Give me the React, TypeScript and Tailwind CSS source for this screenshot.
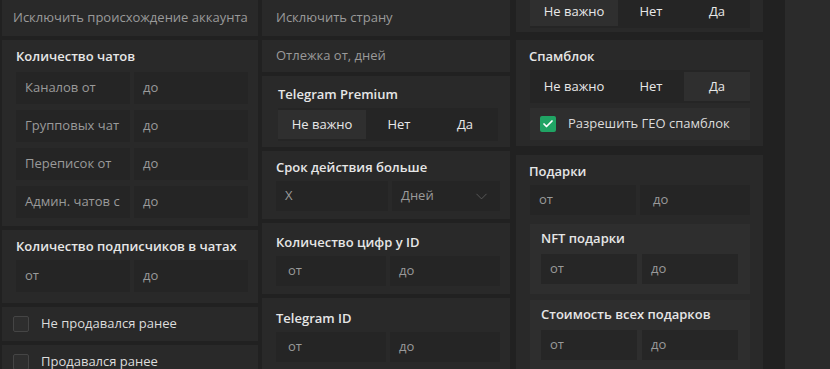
import { Check, ChevronDown } from "lucide-react";

const FONT = { fontFamily: '"Open Sans", "Noto Sans", sans-serif' };

function Title({ children, className = "" }: { children: string; className?: string }) {
  return (
    <p className={`text-[13px] font-semibold leading-[18px] text-[#e6e6e6] ${className}`}>
      {children}
    </p>
  );
}

function Field({
  label,
  className = "",
  tone = "bg-[#252525]",
}: {
  label: string;
  className?: string;
  tone?: string;
}) {
  return (
    <div
      className={`flex items-center overflow-hidden whitespace-nowrap pl-[9px] text-[13px] text-[#9a9a9a] ${tone} ${className}`}
    >
      {label}
    </div>
  );
}

function Segmented({ value, className = "" }: { value: string; className?: string }) {
  const opts = [
    { label: "Не важно", w: "w-[88px]" },
    { label: "Нет", w: "w-[66px]" },
    { label: "Да", w: "w-[66px]" },
  ];
  return (
    <div className={`flex h-[33px] items-center bg-[#252525] ${className}`}>
      {opts.map((o) => (
        <div
          key={o.label}
          className={`flex h-[29px] items-center justify-center text-[13px] text-[#e8e8e8] ${o.w} ${
            o.label === value ? "bg-[#2f2f2f]" : ""
          }`}
        >
          {o.label}
        </div>
      ))}
    </div>
  );
}

function CheckRow({ label }: { label: string }) {
  return (
    <div className="flex h-[34px] shrink-0 items-center gap-[12px] bg-[#292929] pl-[11px] text-[13px] text-[#dcdcdc]">
      <span className="h-[16px] w-[16px] rounded-[2px] border border-[#454545] bg-[#2e2e2e]" />
      {label}
    </div>
  );
}

export default function App() {
  const chats = ["Каналов от", "Групповых чат", "Переписок от", "Админ. чатов с"];

  return (
    <div
      className="flex h-[369px] w-[830px] overflow-hidden bg-[#212121] pl-[2px]"
      style={FONT}
    >
      {/* column 1 */}
      <div className="flex w-[256px] shrink-0 flex-col gap-[4px]">
        <Field
          label="Исключить происхождение аккаунта"
          className="h-[36px] shrink-0 pl-[11px]"
          tone="bg-[#292929]"
        />
        <div className="bg-[#292929] pb-[8px] pl-[14px] pr-[10px] pt-[7px]">
          <Title>Количество чатов</Title>
          <div className="mt-[7px] flex flex-col gap-[6px]">
            {chats.map((c) => (
              <div key={c} className="flex gap-[4px]">
                <Field label={c} className="h-[32px] w-[114px]" />
                <Field label="до" className="h-[32px] w-[114px]" />
              </div>
            ))}
          </div>
        </div>
        <div className="bg-[#292929] pb-[11px] pl-[14px] pr-[10px] pt-[7px]">
          <Title>Количество подписчиков в чатах</Title>
          <div className="mt-[5px] flex gap-[4px]">
            <Field label="от" className="h-[32px] w-[114px]" />
            <Field label="до" className="h-[32px] w-[114px]" />
          </div>
        </div>
        <CheckRow label="Не продавался ранее" />
        <CheckRow label="Продавался ранее" />
      </div>

      {/* column 2 */}
      <div className="ml-[4px] flex w-[248px] shrink-0 flex-col gap-[4px]">
        <Field label="Исключить страну" className="h-[36px] shrink-0 pl-[14px]" tone="bg-[#292929]" />
        <Field label="Отлежка от, дней" className="h-[32px] shrink-0 pl-[14px]" tone="bg-[#292929]" />
        <div className="bg-[#292929] pb-[6px] pl-[16px] pr-[12px] pt-[9px]">
          <Title>Telegram Premium</Title>
          <Segmented value="Не важно" className="mt-[5px] w-[220px]" />
        </div>
        <div className="bg-[#292929] pb-[8px] pl-[14px] pr-[10px] pt-[7px]">
          <Title>Срок действия больше</Title>
          <div className="mt-[5px] flex gap-[4px]">
            <Field label="X" className="h-[30px] w-[112px]" />
            <div className="flex h-[30px] w-[108px] items-center justify-between bg-[#252525] pl-[9px] pr-[9px] text-[13px] text-[#9a9a9a]">
              Дней
              <ChevronDown size={19} strokeWidth={1.1} className="text-[#5f5f5f]" />
            </div>
          </div>
        </div>
        <div className="bg-[#292929] pb-[8px] pl-[14px] pr-[10px] pt-[10px]">
          <Title>Количество цифр у ID</Title>
          <div className="mt-[5px] flex gap-[4px]">
            <Field label="от" className="h-[30px] w-[110px] pl-[12px]" />
            <Field label="до" className="h-[30px] w-[110px]" />
          </div>
        </div>
        <div className="flex-1 bg-[#292929] pl-[14px] pr-[10px] pt-[11px]">
          <Title>Telegram ID</Title>
          <div className="mt-[5px] flex gap-[4px]">
            <Field label="от" className="h-[30px] w-[110px] pl-[12px]" />
            <Field label="до" className="h-[30px] w-[110px]" />
          </div>
        </div>
      </div>

      {/* column 3 */}
      <div className="ml-[6px] flex w-[247px] shrink-0 flex-col">
        <div className="-mt-[10px] bg-[#292929] pb-[4px] pl-[14px] pt-[5px]">
          <Segmented value="Не важно" className="w-[220px]" />
        </div>
        <div className="mt-[8px] bg-[#292929] pb-[6px] pl-[14px] pt-[7px]">
          <Title className="-ml-[1px]">Спамблок</Title>
          <Segmented value="Да" className="mt-[5px] w-[220px]" />
          <div className="mt-[5px] flex h-[32px] w-[220px] items-center gap-[12px] bg-[#2e2e2e] pl-[10px] text-[13px] text-[#dcdcdc]">
            <span className="flex h-[16px] w-[16px] items-center justify-center rounded-[2px] bg-[#20a464]">
              <Check size={12} strokeWidth={3.5} className="text-white" />
            </span>
            Разрешить ГЕО спамблок
          </div>
        </div>
        <div className="mt-[9px] flex-1 bg-[#292929] pl-[14px] pt-[7px]">
          <Title className="-ml-[1px]">Подарки</Title>
          <div className="mt-[5px] flex w-[220px] gap-[4px]">
            <Field label="от" className="h-[30px] w-[106px]" />
            <Field label="до" className="h-[30px] w-[110px] pl-[13px]" />
          </div>
          <div className="mt-[9px] w-[220px] bg-[#2e2e2e] pb-[10px] pl-[11px] pt-[5px]">
            <Title>NFT подарки</Title>
            <div className="mt-[7px] flex gap-[5px]">
              <Field label="от" className="h-[30px] w-[96px]" tone="bg-[#262626]" />
              <Field label="до" className="h-[30px] w-[96px]" tone="bg-[#262626]" />
            </div>
          </div>
          <div className="mt-[6px] w-[220px] bg-[#2e2e2e] pb-[10px] pl-[11px] pt-[5px]">
            <Title>Стоимость всех подарков</Title>
            <div className="mt-[7px] flex gap-[5px]">
              <Field label="от" className="h-[30px] w-[96px]" tone="bg-[#262626]" />
              <Field label="до" className="h-[30px] w-[96px]" tone="bg-[#262626]" />
            </div>
          </div>
        </div>
      </div>

      {/* column 4 */}
      <div className="ml-[22px] flex-1 bg-[#2b2b2b]" />
    </div>
  );
}
